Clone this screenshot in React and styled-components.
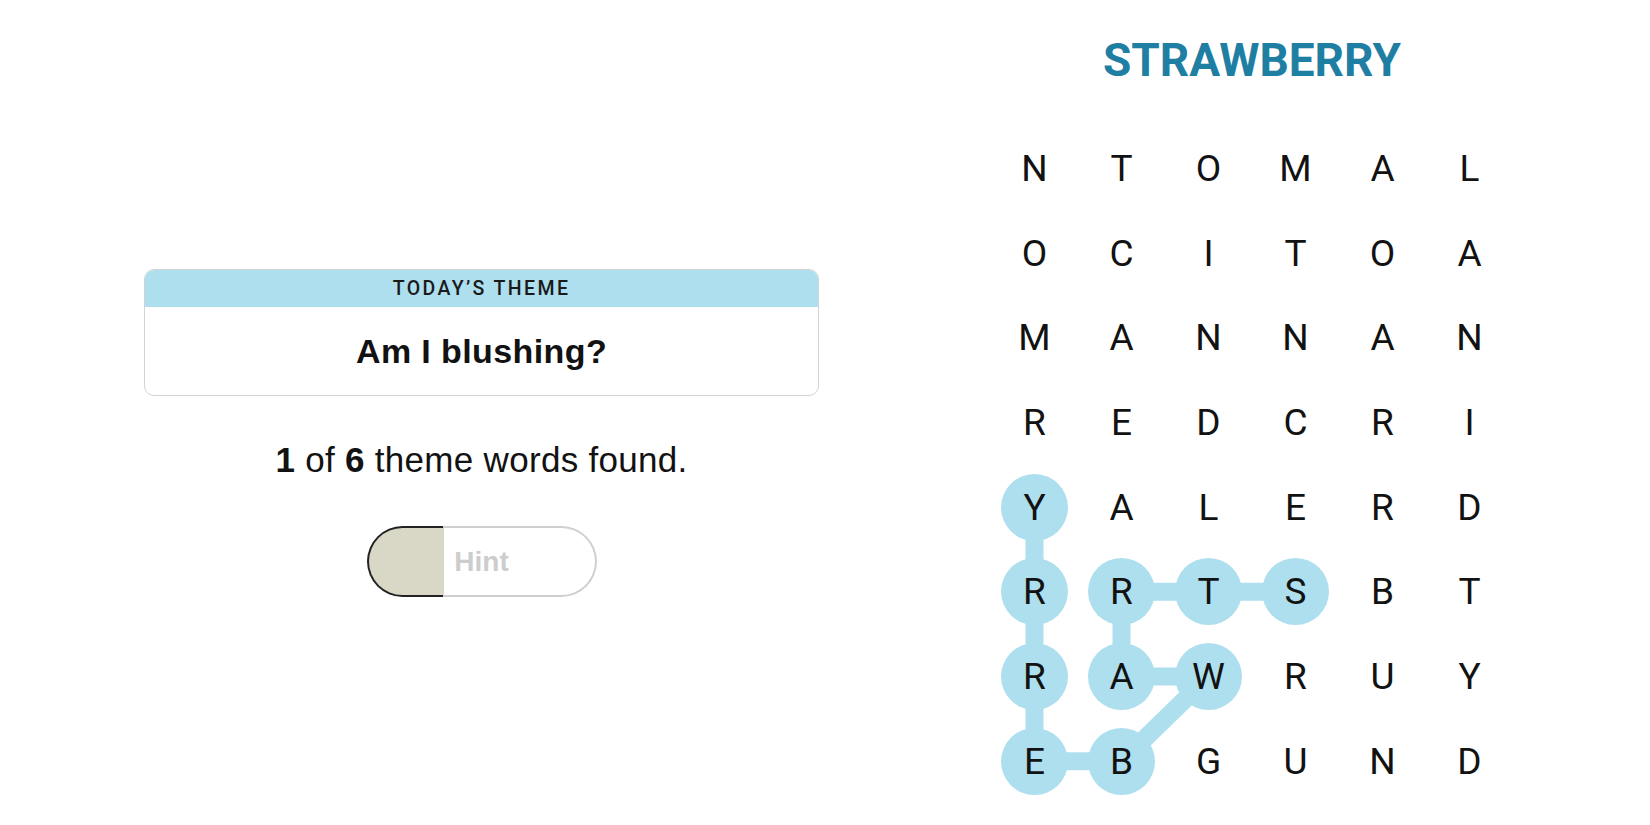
import React from 'react'
import styled, { createGlobalStyle } from 'styled-components'

const GlobalStyle = createGlobalStyle`
  html, body {
    margin: 0;
    padding: 0;
    background: #ffffff;
    font-family: "Liberation Sans", Arial, sans-serif;
    color: #121212;
  }
`

const COL_W = 87
const ROW_H = 84.7
const FOUND = '#aedfee'

const grid = [
  'NTOMAL',
  'OCITOA',
  'MANNAN',
  'REDCRI',
  'YALERD',
  'RRTSBT',
  'RAWRUY',
  'EBGUND',
]

// strawberry path as [row, col]
const path = [
  [5, 3], [5, 2], [5, 1], [6, 1], [6, 2], [7, 1], [7, 0], [6, 0], [5, 0], [4, 0],
]

const Page = styled.main`
  display: flex;
  justify-content: center;
  gap: 172px;
  height: 825px;
  padding-left: 7px;
  box-sizing: border-box;
  overflow: hidden;
`

const LeftColumn = styled.section`
  width: 675px;
  padding-top: 269px;
  display: flex;
  flex-direction: column;
  align-items: center;
`

const ThemeCard = styled.div`
  width: 100%;
  border: 1px solid #d3d3d3;
  border-radius: 10px;
  overflow: hidden;
  box-sizing: border-box;
`

const ThemeHeader = styled.div`
  height: 37px;
  background: ${FOUND};
  display: flex;
  align-items: center;
  justify-content: center;
  font-family: Roboto, "Liberation Sans", sans-serif;
  font-size: 19.5px;
  font-weight: 500;
  letter-spacing: 2.4px;
  text-transform: uppercase;
  color: #1a1a1a;
`

const ThemeBody = styled.div`
  height: 88px;
  display: flex;
  align-items: center;
  justify-content: center;
  font-size: 34px;
  font-weight: 700;
  letter-spacing: 0.4px;
`

const Progress = styled.p`
  margin: 44px 0 0;
  font-size: 35px;
  line-height: 40px;
  letter-spacing: 0.3px;

  b {
    font-weight: 700;
  }
`

const HintOuter = styled.button`
  margin-top: 46px;
  width: 230px;
  height: 71px;
  padding: 2px;
  border: none;
  border-radius: 36px;
  background: linear-gradient(to right, #222 ${(p) => p.$fill}%, #cfcfcf ${(p) => p.$fill}%);
  cursor: pointer;
  box-sizing: border-box;
`

const HintInner = styled.span`
  display: flex;
  align-items: center;
  justify-content: center;
  height: 100%;
  border-radius: 34px;
  background: linear-gradient(to right, #d9d7c5 ${(p) => p.$fill}%, #ffffff ${(p) => p.$fill}%);
  font-family: "Liberation Sans", Arial, sans-serif;
  font-size: 28px;
  font-weight: 700;
  color: #cdcdcd;
`

const RightColumn = styled.section`
  width: ${COL_W * 6}px;
  display: flex;
  flex-direction: column;
  align-items: center;
`

const Spangram = styled.h1`
  margin: 32px 0 0;
  height: 56px;
  line-height: 56px;
  font-family: Roboto, "Liberation Sans", sans-serif;
  font-size: 46px;
  font-weight: 700;
  color: #1f7fa3;
`

const Board = styled.div`
  position: relative;
  margin-top: 38px;
  display: grid;
  grid-template-columns: repeat(6, ${COL_W}px);
  grid-template-rows: repeat(8, ${ROW_H}px);
`

const Connectors = styled.svg`
  position: absolute;
  inset: 0;
  width: 100%;
  height: 100%;
  pointer-events: none;
`

const Cell = styled.div`
  position: relative;
  display: flex;
  align-items: center;
  justify-content: center;
`

const Letter = styled.span`
  width: 67px;
  height: 67px;
  border-radius: 50%;
  display: flex;
  align-items: center;
  justify-content: center;
  background: ${(p) => (p.$found ? FOUND : 'transparent')};
  font-family: Roboto, "Liberation Sans", sans-serif;
  font-size: 37px;
  font-weight: 400;
  color: #121212;
`

const center = ([r, c]) => [c * COL_W + COL_W / 2, r * ROW_H + ROW_H / 2]

const App = () => {
  const foundSet = new Set(path.map(([r, c]) => `${r}-${c}`))
  const fill = 33

  return (
    <>
      <GlobalStyle />
      <Page>
        <LeftColumn>
          <ThemeCard>
            <ThemeHeader>Today’s Theme</ThemeHeader>
            <ThemeBody>Am I blushing?</ThemeBody>
          </ThemeCard>
          <Progress>
            <b>1</b> of <b>6</b> theme words found.
          </Progress>
          <HintOuter $fill={fill}>
            <HintInner $fill={fill}>Hint</HintInner>
          </HintOuter>
        </LeftColumn>

        <RightColumn>
          <Spangram>STRAWBERRY</Spangram>
          <Board>
            <Connectors>
              {path.slice(1).map((p, i) => {
                const [x1, y1] = center(path[i])
                const [x2, y2] = center(p)
                return (
                  <line key={i} x1={x1} y1={y1} x2={x2} y2={y2} stroke={FOUND} strokeWidth="18" />
                )
              })}
            </Connectors>
            {grid.map((row, r) =>
              row.split('').map((ch, c) => (
                <Cell key={`${r}-${c}`}>
                  <Letter $found={foundSet.has(`${r}-${c}`)}>{ch}</Letter>
                </Cell>
              ))
            )}
          </Board>
        </RightColumn>
      </Page>
    </>
  )
}

export default App
